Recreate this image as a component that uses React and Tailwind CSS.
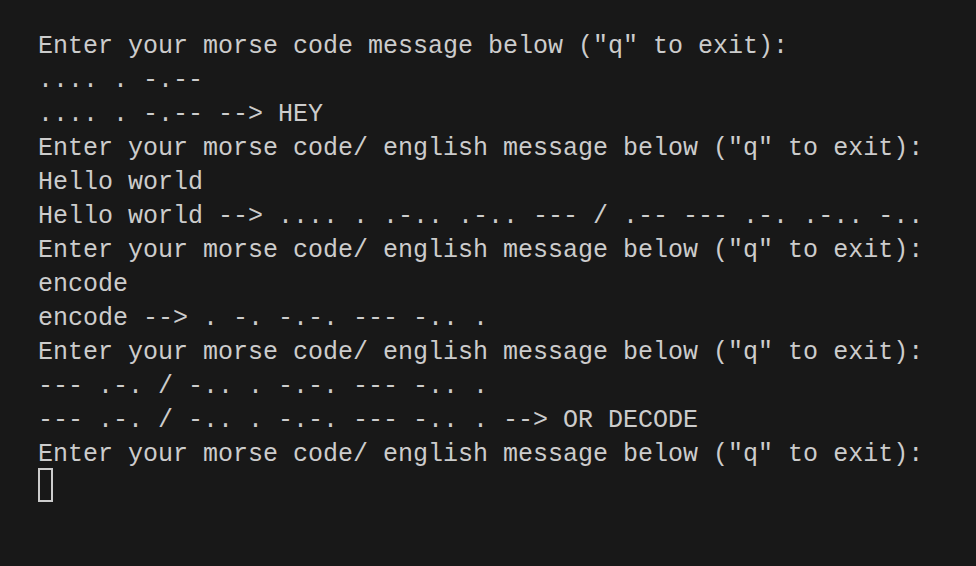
const LINES = [
  'Enter your morse code message below ("q" to exit):',
  '.... . -.--',
  '.... . -.-- --> HEY',
  'Enter your morse code/ english message below ("q" to exit):',
  'Hello world',
  'Hello world --> .... . .-.. .-.. --- / .-- --- .-. .-.. -..',
  'Enter your morse code/ english message below ("q" to exit):',
  'encode',
  'encode --> . -. -.-. --- -.. .',
  'Enter your morse code/ english message below ("q" to exit):',
  '--- .-. / -.. . -.-. --- -.. .',
  '--- .-. / -.. . -.-. --- -.. . --> OR DECODE',
  'Enter your morse code/ english message below ("q" to exit):',
]

export default function App() {
  return (
    <div className="w-[976px] h-[566px] overflow-hidden bg-[#181818] pl-[38px] pt-[30px] font-['Liberation_Mono',monospace] text-[25px] leading-[34px] text-[#cccccc]">
      {LINES.map((l, i) => (
        <div key={i} className="whitespace-pre">{l}</div>
      ))}
      {/* cursor */}
      <div className="-mt-[4px] w-[15px] h-[34px] border-2 border-[#cccccc]" />
    </div>
  )
}
